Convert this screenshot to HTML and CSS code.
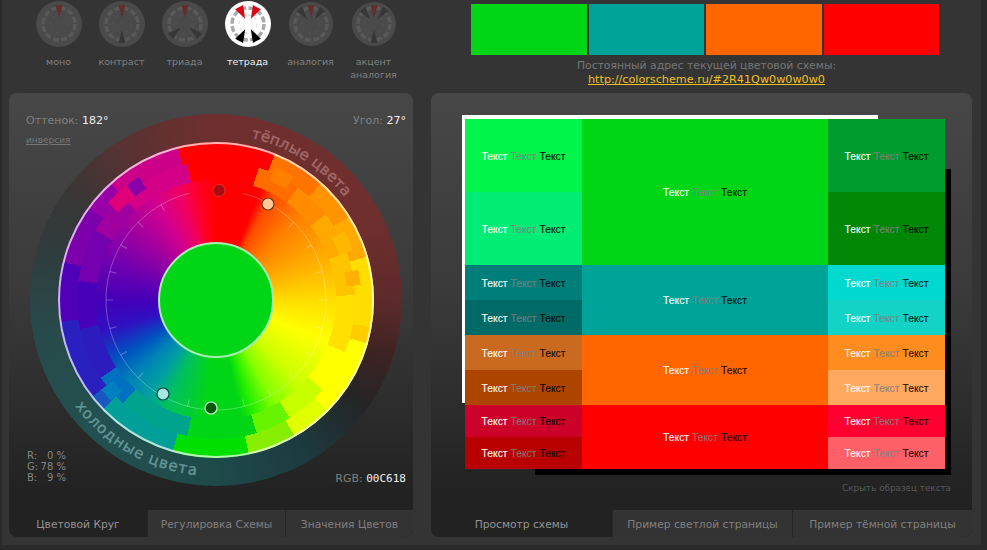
FILE: index.html
```html
<!DOCTYPE html>
<html lang="ru">
<head>
<meta charset="utf-8">
<title>Цветовой круг</title>
<link rel="stylesheet" href="styles.css">
</head>
<body>
<div class="page">
  <header class="top">
    <nav class="presets">
      <a class="preset"><svg class="dial" viewBox="-23 -23 46 46"><circle class="disc" r="23"/><circle class="seg" r="16" /><circle class="seg-in" r="9"/><path class="w-a" d="M-3.5-19H3.5L0-6Z"/></svg><span>моно</span></a>
      <a class="preset"><svg class="dial" viewBox="-23 -23 46 46"><circle class="disc" r="23"/><circle class="seg" r="16" /><circle class="seg-in" r="9"/><path class="w-a" d="M-3.5-19H3.5L0-6Z"/><path class="w-b" transform="rotate(180)" d="M-3.5-19H3.5L0-6Z"/></svg><span>контраст</span></a>
      <a class="preset"><svg class="dial" viewBox="-23 -23 46 46"><circle class="disc" r="23"/><circle class="seg" r="16" /><circle class="seg-in" r="9"/><path class="w-a" d="M-3.5-19H3.5L0-6Z"/><path class="w-b" transform="rotate(130)" d="M-4-19H4L0-6Z"/><path class="w-b" transform="rotate(230)" d="M-4-19H4L0-6Z"/></svg><span>триада</span></a>
      <a class="preset is-active"><svg class="dial" viewBox="-23 -23 46 46"><circle class="disc" r="23"/><circle class="seg" r="16" /><circle class="seg-in" r="9"/><path class="w-a" transform="rotate(-28)" d="M-4.5-19H4.5L0-6Z"/><path class="w-a" transform="rotate(28)" d="M-4.5-19H4.5L0-6Z"/><path class="w-b" transform="rotate(152)" d="M-4.5-19H4.5L0-6Z"/><path class="w-b" transform="rotate(208)" d="M-4.5-19H4.5L0-6Z"/></svg><span>тетрада</span></a>
      <a class="preset"><svg class="dial" viewBox="-23 -23 46 46"><circle class="disc" r="22"/><circle class="seg" r="16" /><circle class="seg-in" r="9"/><path class="w-a" d="M-3.5-19H3.5L0-6Z"/><path class="w-b" transform="rotate(-38)" d="M-3.5-19H3.5L0-6Z"/><path class="w-b" transform="rotate(38)" d="M-3.5-19H3.5L0-6Z"/></svg><span>аналогия</span></a>
      <a class="preset"><svg class="dial" viewBox="-23 -23 46 46"><circle class="disc" r="22"/><circle class="seg" r="16" /><circle class="seg-in" r="9"/><path class="w-a" d="M-3.5-19H3.5L0-6Z"/><path class="w-b" transform="rotate(-38)" d="M-3.5-19H3.5L0-6Z"/><path class="w-b" transform="rotate(38)" d="M-3.5-19H3.5L0-6Z"/><path class="w-b" transform="rotate(180)" d="M-3.5-19H3.5L0-6Z"/></svg><span>акцент аналогия</span></a>
    </nav>
    <div class="scheme">
      <div class="swatches">
        <div class="c-green"></div>
        <div class="c-teal"></div>
        <div class="c-orange"></div>
        <div class="c-red"></div>
      </div>
      <p class="perma">Постоянный адрес текущей цветовой схемы:<br><a class="perma-link">http://colorscheme.ru/#2R41Qw0w0w0w0</a></p>
    </div>
  </header>

  <main class="panels">
    <section class="panel panel-wheel">
      <div class="panel-body">
        <div class="wheel">
          <div class="hue">
            <div class="band band-a"></div>
            <div class="band band-c"></div>
            <div class="band band-b"></div>
          </div>
          <svg class="wheel-art" viewBox="0 0 372 372">
            <defs>
              <path id="arc-warm" d="M221 24A164 164 0 0 1 340.1 130"/>
              <path id="arc-cold" d="M45 292A176 176 0 0 0 222 358.3"/>
            </defs>
            <circle class="rim" cx="186" cy="186" r="157"/>
            <path class="dial-arc" d="M212.6 79.3A110 110 0 1 1 159.4 79.3"/>
            <g class="ticks">
              <line x1="186" y1="76" x2="186" y2="83" transform="rotate(30 186 186)"/>
              <line x1="186" y1="76" x2="186" y2="83" transform="rotate(45 186 186)"/>
              <line x1="186" y1="76" x2="186" y2="83" transform="rotate(60 186 186)"/>
              <line x1="186" y1="76" x2="186" y2="83" transform="rotate(75 186 186)"/>
              <line x1="186" y1="76" x2="186" y2="83" transform="rotate(90 186 186)"/>
              <line x1="186" y1="76" x2="186" y2="83" transform="rotate(105 186 186)"/>
              <line x1="186" y1="76" x2="186" y2="83" transform="rotate(120 186 186)"/>
              <line x1="186" y1="76" x2="186" y2="83" transform="rotate(135 186 186)"/>
              <line x1="186" y1="76" x2="186" y2="83" transform="rotate(150 186 186)"/>
              <line x1="186" y1="76" x2="186" y2="83" transform="rotate(165 186 186)"/>
              <line x1="186" y1="76" x2="186" y2="83" transform="rotate(180 186 186)"/>
              <line x1="186" y1="76" x2="186" y2="83" transform="rotate(195 186 186)"/>
              <line x1="186" y1="76" x2="186" y2="83" transform="rotate(210 186 186)"/>
              <line x1="186" y1="76" x2="186" y2="83" transform="rotate(225 186 186)"/>
              <line x1="186" y1="76" x2="186" y2="83" transform="rotate(240 186 186)"/>
              <line x1="186" y1="76" x2="186" y2="83" transform="rotate(255 186 186)"/>
              <line x1="186" y1="76" x2="186" y2="83" transform="rotate(270 186 186)"/>
              <line x1="186" y1="76" x2="186" y2="83" transform="rotate(285 186 186)"/>
              <line x1="186" y1="76" x2="186" y2="83" transform="rotate(300 186 186)"/>
              <line x1="186" y1="76" x2="186" y2="83" transform="rotate(315 186 186)"/>
              <line x1="186" y1="76" x2="186" y2="83" transform="rotate(330 186 186)"/>
            </g>
            <circle class="core" cx="186" cy="186" r="57"/>
            <text class="arc-text warm"><textPath href="#arc-warm">тёплые цвета</textPath></text>
            <text class="arc-text cold"><textPath href="#arc-cold">холодные цвета</textPath></text>
            <circle class="h-red" cx="189" cy="76.5" r="6"/>
            <circle class="h-peach" cx="238" cy="90" r="6"/>
            <circle class="h-aqua" cx="133" cy="280" r="6"/>
            <circle class="h-green" cx="181" cy="294" r="6"/>
          </svg>
        </div>
        <div class="read read-hue">Оттенок: <b>182°</b></div>
        <a class="invert">инверсия</a>
        <div class="read read-angle">Угол: <b>27°</b></div>
        <div class="rgb-pct">
          <span>R:</span><span>0 %</span>
          <span>G:</span><span>78 %</span>
          <span>B:</span><span>9 %</span>
        </div>
        <div class="read read-rgb">RGB: <code>00C618</code></div>
      </div>
      <div class="tabs tabs-wheel">
        <a class="tab is-active">Цветовой Круг</a>
        <a class="tab">Регулировка Схемы</a>
        <a class="tab">Значения Цветов</a>
      </div>
    </section>

    <section class="panel panel-sample">
      <div class="panel-body sample-body">
        <div class="sample">
          <div class="sheet-white"></div>
          <div class="sheet-black"></div>
          <div class="grid">
            <div class="cell g1"><span class="t1">Текст</span> <span class="t2">Текст</span> <span class="t3">Текст</span></div>
            <div class="cell m2 c-green"><span class="t1">Текст</span> <span class="t2">Текст</span> <span class="t3">Текст</span></div>
            <div class="cell g3"><span class="t1">Текст</span> <span class="t2">Текст</span> <span class="t3">Текст</span></div>
            <div class="cell g2"><span class="t1">Текст</span> <span class="t2">Текст</span> <span class="t3">Текст</span></div>
            <div class="cell g4"><span class="t1">Текст</span> <span class="t2">Текст</span> <span class="t3">Текст</span></div>
            <div class="cell b1"><span class="t1">Текст</span> <span class="t2">Текст</span> <span class="t3">Текст</span></div>
            <div class="cell m2 c-teal"><span class="t1">Текст</span> <span class="t2">Текст</span> <span class="t3">Текст</span></div>
            <div class="cell b3"><span class="t1">Текст</span> <span class="t2">Текст</span> <span class="t3">Текст</span></div>
            <div class="cell b2"><span class="t1">Текст</span> <span class="t2">Текст</span> <span class="t3">Текст</span></div>
            <div class="cell b4"><span class="t1">Текст</span> <span class="t2">Текст</span> <span class="t3">Текст</span></div>
            <div class="cell o1"><span class="t1">Текст</span> <span class="t2">Текст</span> <span class="t3">Текст</span></div>
            <div class="cell m2 c-orange"><span class="t1">Текст</span> <span class="t2">Текст</span> <span class="t3">Текст</span></div>
            <div class="cell o3"><span class="t1">Текст</span> <span class="t2">Текст</span> <span class="t3">Текст</span></div>
            <div class="cell o2"><span class="t1">Текст</span> <span class="t2">Текст</span> <span class="t3">Текст</span></div>
            <div class="cell o4"><span class="t1">Текст</span> <span class="t2">Текст</span> <span class="t3">Текст</span></div>
            <div class="cell e1"><span class="t1">Текст</span> <span class="t2">Текст</span> <span class="t3">Текст</span></div>
            <div class="cell m2 c-red"><span class="t1">Текст</span> <span class="t2">Текст</span> <span class="t3">Текст</span></div>
            <div class="cell e3"><span class="t1">Текст</span> <span class="t2">Текст</span> <span class="t3">Текст</span></div>
            <div class="cell e2"><span class="t1">Текст</span> <span class="t2">Текст</span> <span class="t3">Текст</span></div>
            <div class="cell e4"><span class="t1">Текст</span> <span class="t2">Текст</span> <span class="t3">Текст</span></div>
          </div>
        </div>
        <a class="hide-sample">Скрыть образец текста</a>
      </div>
      <div class="tabs tabs-sample">
        <a class="tab is-active">Просмотр схемы</a>
        <a class="tab">Пример светлой страницы</a>
        <a class="tab">Пример тёмной страницы</a>
      </div>
    </section>
  </main>
</div>
</body>
</html>
```

FILE: styles.css
```css
* { box-sizing: border-box; }
html, body { margin: 0; height: 100%; }
body {
  background: #2a2a2a;
  font-family: "DejaVu Sans", sans-serif;
  overflow: hidden;
}
.page {
  width: 979px;
  height: 545px;
  margin-left: 2px;
  background: #343434;
  display: flex;
  flex-direction: column;
}

/* top */
.top { display: flex; height: 93px; flex: none; }
.presets { display: flex; width: 469px; padding: 1px 0 0 25px; }
.preset {
  width: 63px;
  display: flex;
  flex-direction: column;
  align-items: center;
  text-align: center;
  font-size: 9.5px;
  line-height: 13px;
  color: #808080;
}
.dial { width: 46px; height: 46px; display: block; margin-bottom: 8px; }
.disc { fill: #4a4a4a; }
.seg { fill: none; stroke: #595959; stroke-width: 3.5; stroke-dasharray: 6 2.38; }
.seg-in { fill: none; stroke: #505050; stroke-width: 1.5; stroke-dasharray: 3 4; }
.w-a { fill: #642c2c; }
.w-b { fill: #373737; }
.is-active .disc { fill: #fff; }
.is-active .seg { stroke: #aaa; }
.is-active .seg-in { stroke: #e2e2e2; }
.is-active .w-a { fill: #d40a14; }
.is-active .w-b { fill: #000; }
.preset.is-active { color: #eee; }

.scheme { width: 468px; padding-top: 4px; }
.swatches { display: grid; grid-template-columns: repeat(4, 1fr); gap: 2px; height: 51px; }
.perma {
  margin: 4px 0 0;
  padding-left: 3px;
  text-align: center;
  font-size: 10.8px;
  line-height: 14px;
  color: #777;
}
.perma-link { font-size: 11.2px; color: #f2c11f; text-decoration: underline; }

.c-green { background: #00d615; }
.c-teal { background: #00a398; }
.c-orange { background: #ff6600; }
.c-red { background: #ff0000; }

/* panels */
.panels { display: flex; gap: 18px; padding-left: 7px; }
.panel {
  height: 444px;
  display: flex;
  flex-direction: column;
  border-radius: 8px;
  background: linear-gradient(#474747, #3a3a3a 45%, #222 90%);
  overflow: hidden;
}
.panel-wheel { width: 404px; }
.panel-sample { width: 541px; }
.panel-body { position: relative; flex: 1; }

.tabs { display: flex; height: 27px; flex: none; font-size: 10.7px; }
.tab {
  display: flex;
  align-items: center;
  justify-content: center;
  padding-top: 1px;
  background: #333;
  color: #808080;
  border-left: 1px solid #262626;
}
.tab.is-active { background: none; border-left: 0; color: #949494; }
.tabs-wheel .tab { width: 138px; }
.tabs-wheel .tab:last-child { width: 128px; }
.tabs-sample .tab { width: 180px; }
.tabs-sample .tab:first-child { width: 181px; }

/* wheel */
.wheel {
  position: relative;
  width: 372px;
  height: 372px;
  margin: 21px 0 0 21px;
  border-radius: 50%;
  background: conic-gradient(#6f2f2f 0deg, #702f2f 60deg, #5e2a2a 90deg, #3e2323 108deg, #252525 125deg, #1c3a40 150deg, #1e4a4a 180deg, #235050 225deg, #284a4a 260deg, #2f3d3e 285deg, #383636 305deg, #5a3232 330deg, #6f2f2f 360deg);
}
.hue {
  position: absolute;
  inset: 28px;
  border-radius: 50%;
  background: conic-gradient(#ff0000 0deg, #ff0000 22deg, #ff4a00 28deg, #ff8000 45deg, #ffb000 70deg, #ffdd00 90deg, #ffff00 110deg, #ccff00 135deg, #88ff00 150deg, #22ee00 162deg, #00d615 168deg, #00d615 185deg, #00c060 205deg, #00a0a0 215deg, #0080b8 228deg, #0050c0 240deg, #3010c0 255deg, #4400b8 270deg, #7000b0 290deg, #a000a0 310deg, #d00090 328deg, #f00060 342deg, #ff0020 352deg, #ff0000 360deg);
}
.band { position: absolute; inset: 0; border-radius: 50%; }
.band-a {
  background: conic-gradient(#ff0000 0 18deg, #ff6c00 18deg 36deg, #ff8c00 36deg 52deg, #ffa800 52deg 70deg, #ffc400 70deg 88deg, #ffe000 88deg 112deg, #ffff00 112deg 130deg, #c8ff00 130deg 148deg, #66f400 148deg 163deg, #00d615 163deg 192deg, #00a48c 192deg 222deg, #0070c0 222deg 236deg, #2c1cc0 236deg 258deg, #4800b8 258deg 278deg, #7400b0 278deg 300deg, #a000a0 300deg 318deg, #d40088 318deg 348deg, #ff0000 348deg 360deg);
  -webkit-mask-image: radial-gradient(circle closest-side, transparent 76%, #000 76%, #000 88%, transparent 88%);
  mask-image: radial-gradient(circle closest-side, transparent 76%, #000 76%, #000 88%, transparent 88%);
}
.band-c {
  background: conic-gradient(#ff0000 0 22deg, #ff7400 22deg 42deg, #ff9400 42deg 58deg, #ffaa00 58deg 74deg, #ffdd00 74deg 100deg, #ffcc00 100deg 106deg, #ffff00 106deg 135deg, #e0ff00 135deg 150deg, #88ee00 150deg 168deg, #00e000 168deg 196deg, #00a098 196deg 226deg, #1858c0 226deg 232deg, #2a20c0 232deg 262deg, #5000b8 262deg 284deg, #7c00ac 284deg 306deg, #9800a8 306deg 318deg, #cc0088 318deg 346deg, #ff0000 346deg 360deg);
  -webkit-mask-image: radial-gradient(circle closest-side, transparent 88%, #000 88%);
  mask-image: radial-gradient(circle closest-side, transparent 88%, #000 88%);
}
.band-b {
  background: conic-gradient(transparent 0 24deg, #ff8000 24deg 32deg, transparent 32deg 62deg, #ffb800 62deg 70deg, transparent 70deg 78deg, #ffb000 78deg 84deg, transparent 84deg 226deg, #0080c0 226deg 232deg, transparent 232deg 312deg, #e0007a 312deg 322deg, #8a00a8 322deg 328deg, transparent 328deg 360deg);
  -webkit-mask-image: radial-gradient(circle closest-side, transparent 83%, #000 83%, #000 92%, transparent 92%);
  mask-image: radial-gradient(circle closest-side, transparent 83%, #000 83%, #000 92%, transparent 92%);
}
.wheel-art { position: absolute; inset: 0; width: 372px; height: 372px; overflow: visible; }
.rim { fill: none; stroke: rgba(255, 255, 255, .7); stroke-width: 2; }
.dial-arc { fill: none; stroke: rgba(255, 255, 255, .28); stroke-width: 1; }
.ticks line { stroke: rgba(255, 255, 255, .28); stroke-width: 1; }
.core { fill: #00d615; stroke: #a8ecb0; stroke-width: 2; }
.arc-text { font-family: "DejaVu Sans", sans-serif; font-size: 15px; stroke-width: .35px; }
.warm { fill: #a56a6a; stroke: #a56a6a; letter-spacing: .3px; }
.cold { fill: #649898; stroke: #649898; letter-spacing: 1.1px; }
.h-red { fill: #a80a10; stroke: #e03030; stroke-width: 1; }
.h-peach { fill: #ffc79a; stroke: #6a3a1a; stroke-width: 1.2; }
.h-aqua { fill: #a8e8e4; stroke: #0c4a4a; stroke-width: 1.2; }
.h-green { fill: #005a08; stroke: #c8f0c8; stroke-width: 1.2; }

/* readouts over the wheel */
.read { position: absolute; font-size: 11px; line-height: 14px; color: #808080; }
.read b { font-weight: normal; color: #eee; }
.read-hue { left: 17px; top: 21px; }
.read-angle { right: 7px; top: 21px; }
.read-rgb { right: 7px; top: 379px; }
.read-rgb code { font-family: "DejaVu Sans Mono", monospace; color: #eee; }
.invert {
  position: absolute;
  left: 17px;
  top: 41px;
  font-size: 9px;
  line-height: 12px;
  color: #777;
  text-decoration: underline;
}
.rgb-pct {
  position: absolute;
  left: 18px;
  top: 357px;
  display: grid;
  grid-template-columns: 13px 26px;
  font-size: 10px;
  line-height: 11px;
  color: #858585;
  white-space: nowrap;
}
.rgb-pct span:nth-child(even) { text-align: right; }

/* sample */
.sample-body { padding: 26px 0 0 34px; }
.sample { position: relative; width: 480px; height: 350px; }
.sheet-white { position: absolute; left: -3px; top: -4px; width: 416px; height: 288px; background: #fff; }
.sheet-black { position: absolute; left: 70px; top: 50px; width: 416px; height: 306px; background: #000; }
.grid {
  position: relative;
  display: grid;
  grid-template-columns: 117px 246px 117px;
  grid-template-rows: 73px 73px 35px 35px 35px 35px 32px 32px;
  height: 350px;
  font-family: "Liberation Sans", sans-serif;
  font-size: 10.3px;
}
.cell { display: flex; align-items: center; justify-content: center; gap: 3px; padding-top: 1px; }
.m2 { grid-row: span 2; }
.g1 { background: #00f54a; }
.g2 { background: #00ec74; }
.g3 { background: #009c2e; }
.g4 { background: #008706; }
.b1 { background: #007f7a; }
.b2 { background: #006b66; }
.b3 { background: #00d9d0; }
.b4 { background: #12d3c6; }
.o1 { background: #c96a20; }
.o2 { background: #ad4400; }
.o3 { background: #ff8c1f; }
.o4 { background: #ffa860; }
.e1 { background: #cc0028; }
.e2 { background: #b80000; }
.e3 { background: #ff0030; }
.e4 { background: #ff6067; }
.t1 { color: rgba(255, 255, 255, .92); -webkit-text-stroke: .2px; }
.t2 { color: rgba(128, 128, 128, .85); -webkit-text-stroke: .2px; }
.t3 { color: rgba(0, 0, 0, .85); -webkit-text-stroke: .2px; }
.hide-sample {
  position: absolute;
  right: 21px;
  top: 389px;
  font-size: 8.8px;
  line-height: 12px;
  color: #585858;
}
```
